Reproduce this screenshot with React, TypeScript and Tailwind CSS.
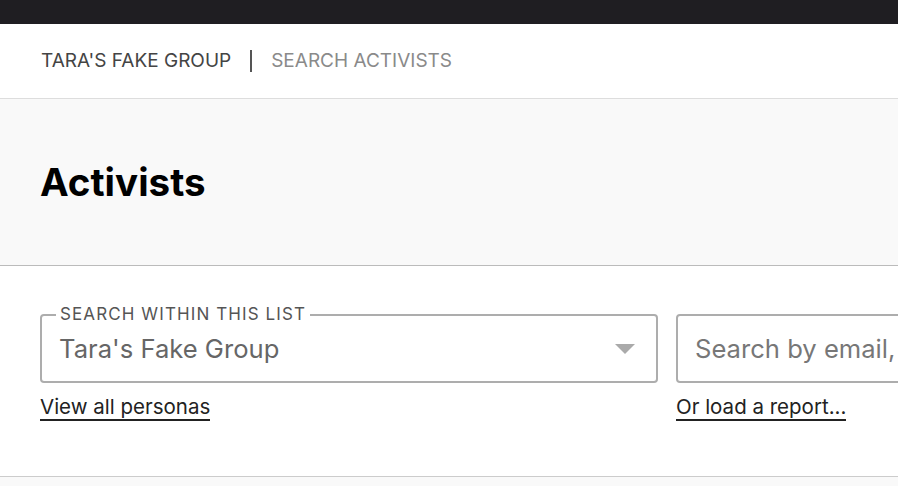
import React from "react";

const Field = ({
  label,
  value,
  placeholder,
  select,
}: {
  label?: string;
  value?: string;
  placeholder?: string;
  select?: boolean;
}) => (
  <div className="relative flex h-[69px] w-[618px] shrink-0 items-center rounded-[4px] border-2 border-[#adadad] bg-white pl-[17px] pr-[21px]">
    {label && (
      <span className="absolute -top-[12px] left-[14px] bg-white px-[4px] text-[17px] uppercase leading-[20px] tracking-[0.065em] text-[#555]">
        {label}
      </span>
    )}
    <span
      className={
        "flex-1 truncate text-[25.6px] leading-[30px] " +
        (value ? "text-[#666]" : "text-[#777]")
      }
    >
      {value || placeholder}
    </span>
    {select && (
      <svg width="20" height="10" viewBox="0 0 20 10" className="shrink-0">
        <path d="M0 0 L20 0 L10 10 Z" fill="#aaaaaa" />
      </svg>
    )}
  </div>
);

export default function App() {
  return (
    <div
      className="min-h-screen w-[898px] overflow-hidden bg-[#f9f9f9]"
      style={{ fontFamily: "Inter, 'Noto Sans', sans-serif" }}
    >
      {/* top bar */}
      <div className="h-6 bg-[#1f1e22]" />

      {/* breadcrumb nav */}
      <nav className="flex h-[75px] items-center border-b border-[#dddddd] bg-white px-[41px] text-[19px] uppercase">
        <span className="text-[#444]">Tara's Fake Group</span>
        <span className="mx-[19px] h-[22px] w-[2px] bg-[#555]" />
        <span className="text-[#8a8a8a]">Search Activists</span>
      </nav>

      {/* page header */}
      <header className="flex h-[167px] items-center border-b border-[#bbbbbb] bg-[#f9f9f9] px-[40px]">
        <h1 className="text-[38.5px] font-bold leading-none text-black">Activists</h1>
      </header>

      {/* search section */}
      <section className="h-[211px] border-b border-[#cccccc] bg-white px-[40px] pt-[48px]">
        <div className="flex gap-[18px]">
          <div className="flex shrink-0 flex-col">
            <Field label="Search within this list" value="Tara's Fake Group" select />
            <div className="mt-[11px]">
              <a href="#" className="border-b-2 border-[#222] text-[20.5px] leading-[25px] text-[#222]">
                View all personas
              </a>
            </div>
          </div>
          <div className="flex shrink-0 flex-col">
            <Field placeholder="Search by email, name or phone" />
            <div className="mt-[11px]">
              <a href="#" className="border-b-2 border-[#222] text-[20.5px] leading-[25px] text-[#222]">
                Or load a report...
              </a>
            </div>
          </div>
        </div>
      </section>
    </div>
  );
}
